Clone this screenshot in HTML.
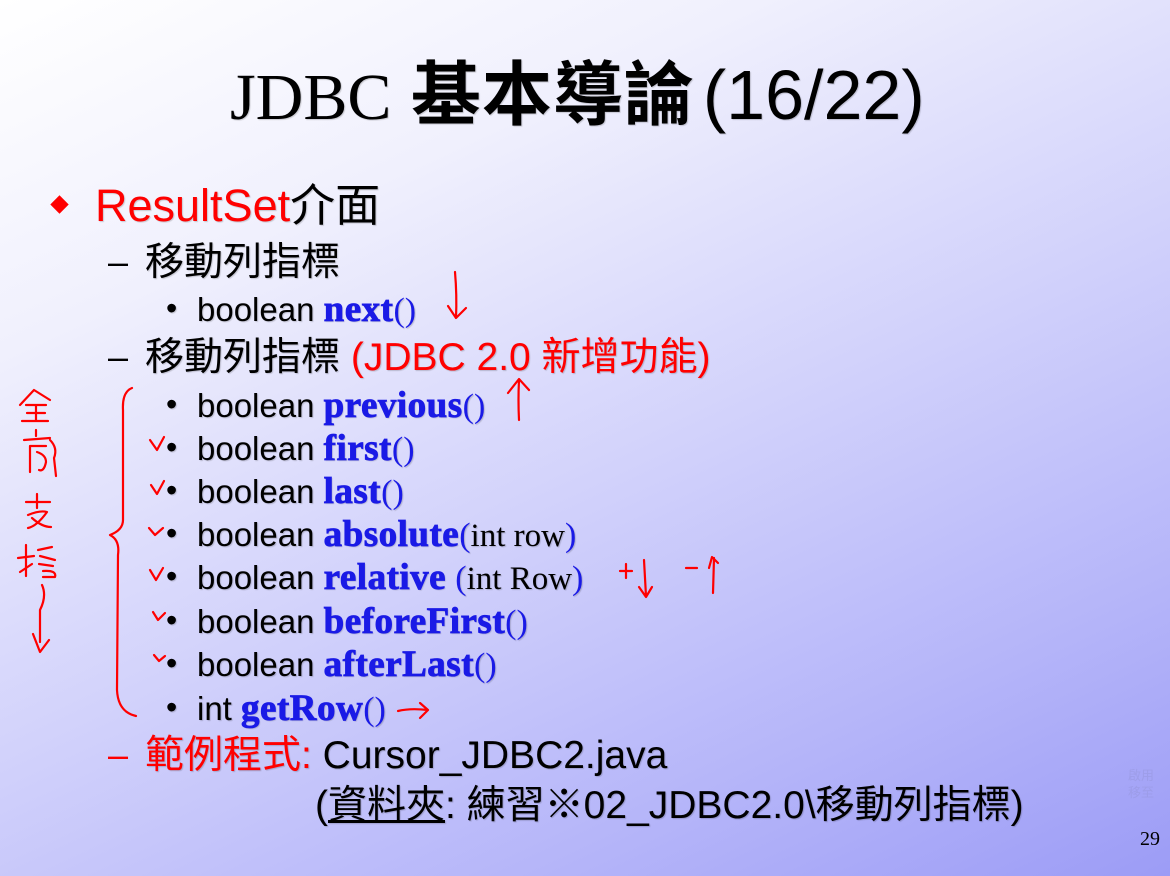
<!DOCTYPE html>
<html><head><meta charset="utf-8">
<style>
*{margin:0;padding:0}
body{width:1170px;height:876px;overflow:hidden;position:relative;
background:linear-gradient(155deg,#ffffff 0%,#f0f0fd 25%,#d0d0fb 55%,#b4b4f9 80%,#9c9cf6 100%);
font-family:"Liberation Sans","Noto Sans CJK TC",sans-serif;color:#000}
.l{position:absolute;white-space:nowrap;line-height:1;text-shadow:1px 1px 1px rgba(0,0,0,.18)}
.t{font-size:70px;left:230px;top:60px}
.t .s{font-family:"Liberation Serif",serif;font-size:66px}
.t .c{font-weight:bold;letter-spacing:1px}
.l1{font-size:45px;top:183px;left:95px}
.l2{font-size:39px}
.l3{font-size:33px}
.r{color:#ff0000}
.b{color:#1a1ae6;font-family:"Liberation Serif",serif;font-weight:bold;font-size:37px;letter-spacing:0.5px;-webkit-text-stroke:0.8px #1a1ae6}
.p{color:#1a1ae6;font-family:"Liberation Serif",serif;font-size:34px}
.sf{font-family:"Liberation Serif",serif;font-size:33px}
.bl{position:absolute;left:166px;font-size:32px;line-height:1;text-shadow:1px 1px 1px rgba(0,0,0,.18)}
.dash{position:absolute;left:108px;font-size:36px;line-height:1}
</style></head><body>
<div class="l t"><span class="s">JDBC</span> <span class="c">基本導論</span><span style="font-size:70px;margin-left:8px">(16/22)</span></div>

<div style="position:absolute;left:53px;top:198px;width:13px;height:13px;background:#f00;transform:rotate(45deg)"></div>
<div class="l l1"><span class="r">ResultSet</span>介面</div>

<div class="dash" style="top:244px">–</div>
<div class="l l2" style="left:145px;top:243px">移動列指標</div>
<div class="bl" style="top:292px">•</div><div class="l l3" style="left:197px;top:291px">boolean <span class="b">next</span><span class="p">()</span></div>
<div class="dash" style="top:339px">–</div>
<div class="l l2" style="left:145px;top:338px">移動列指標 <span class="r">(JDBC 2.0 新增功能)</span></div>
<div class="bl" style="top:388px">•</div><div class="l l3" style="left:197px;top:387px">boolean <span class="b">previous</span><span class="p">()</span></div>
<div class="bl" style="top:431px">•</div><div class="l l3" style="left:197px;top:430px">boolean <span class="b">first</span><span class="p">()</span></div>
<div class="bl" style="top:474px">•</div><div class="l l3" style="left:197px;top:473px">boolean <span class="b">last</span><span class="p">()</span></div>
<div class="bl" style="top:517px">•</div><div class="l l3" style="left:197px;top:516px">boolean <span class="b">absolute</span><span class="p">(</span><span class="sf">int row</span><span class="p">)</span></div>
<div class="bl" style="top:560px">•</div><div class="l l3" style="left:197px;top:559px">boolean <span class="b">relative</span> <span class="p">(</span><span class="sf">int Row</span><span class="p">)</span></div>
<div class="bl" style="top:604px">•</div><div class="l l3" style="left:197px;top:603px">boolean <span class="b">beforeFirst</span><span class="p">()</span></div>
<div class="bl" style="top:647px">•</div><div class="l l3" style="left:197px;top:646px">boolean <span class="b">afterLast</span><span class="p">()</span></div>
<div class="bl" style="top:691px">•</div><div class="l l3" style="left:197px;top:690px">int <span class="b">getRow</span><span class="p">()</span></div>
<div class="dash r" style="top:737px">–</div>
<div class="l l2" style="left:145px;top:736px"><span class="r">範例程式:</span> Cursor_JDBC2.java</div>
<div class="l l2" style="left:315px;top:786px">(<u>資料夾</u>: 練習※02_JDBC2.0\移動列指標)</div>

<div style="position:absolute;left:1128px;top:768px;font-size:13px;color:rgba(150,150,220,.5);line-height:1.3">啟用<br>移至</div>
<div style="position:absolute;left:1140px;top:828px;font-family:'Liberation Serif',serif;font-size:20px">29</div>

<svg width="1170" height="876" style="position:absolute;left:0;top:0" fill="none" stroke="#ff0000" stroke-width="2.2" stroke-linecap="round" stroke-linejoin="round">
<path d="M455 272 Q457 295 456 318 M448 306 L456 318 L466 308"/>
<path d="M519 420 Q518 400 519 380 M508 393 L519 379 L529 390"/>
<path d="M132 388 Q122 392 123 410 L123 520 Q123 530 110 535 Q120 540 118 555 L117 690 Q118 712 136 716"/>
<path d="M150 440 L157 450 L164 437"/>
<path d="M151 485 L157 494 L164 481"/>
<path d="M149 528 L155 535 L163 528"/>
<path d="M150 570 L156 580 L163 568"/>
<path d="M153 612 L158 620 L165 613"/>
<path d="M154 655 L159 661 L165 656"/>
<path d="M398 711 Q410 708 428 710 M420 703 L428 710 L420 718"/>
<path d="M620 571 L632 571 M626 564 L626 578"/>
<path d="M644 560 L646 596 M639 587 L646 597 L652 587"/>
<path d="M686 568 L697 568"/>
<path d="M713 593 L714 558 M709 568 L712 557 L718 563"/>
<path d="M34 390 L20 405 M34 390 L50 400 M26 405 L46 405 M27 413 L45 413 M36 405 L36 421 M22 421 L48 421"/>
<path d="M36 430 L36 436 M24 440 L50 438 M30 446 L46 446 M30 446 L30 472 M37 452 Q46 455 46 462 Q44 472 39 470 M50 440 Q58 448 54 458 L56 476"/>
<path d="M26 502 L50 502 M37 494 L37 508 M28 515 Q40 510 47 512 Q37 526 28 528 M32 518 Q42 527 51 527"/>
<path d="M18 558 L34 556 M26 545 L26 576 M20 572 L32 564 M38 550 L52 547 M40 556 L55 560 M39 564 L53 566 M43 571 Q57 570 55 577 L43 577"/>
<path d="M42 585 Q47 596 40 610 L40 642 M33 634 L40 652 L49 640"/>
</svg>
</body></html>
